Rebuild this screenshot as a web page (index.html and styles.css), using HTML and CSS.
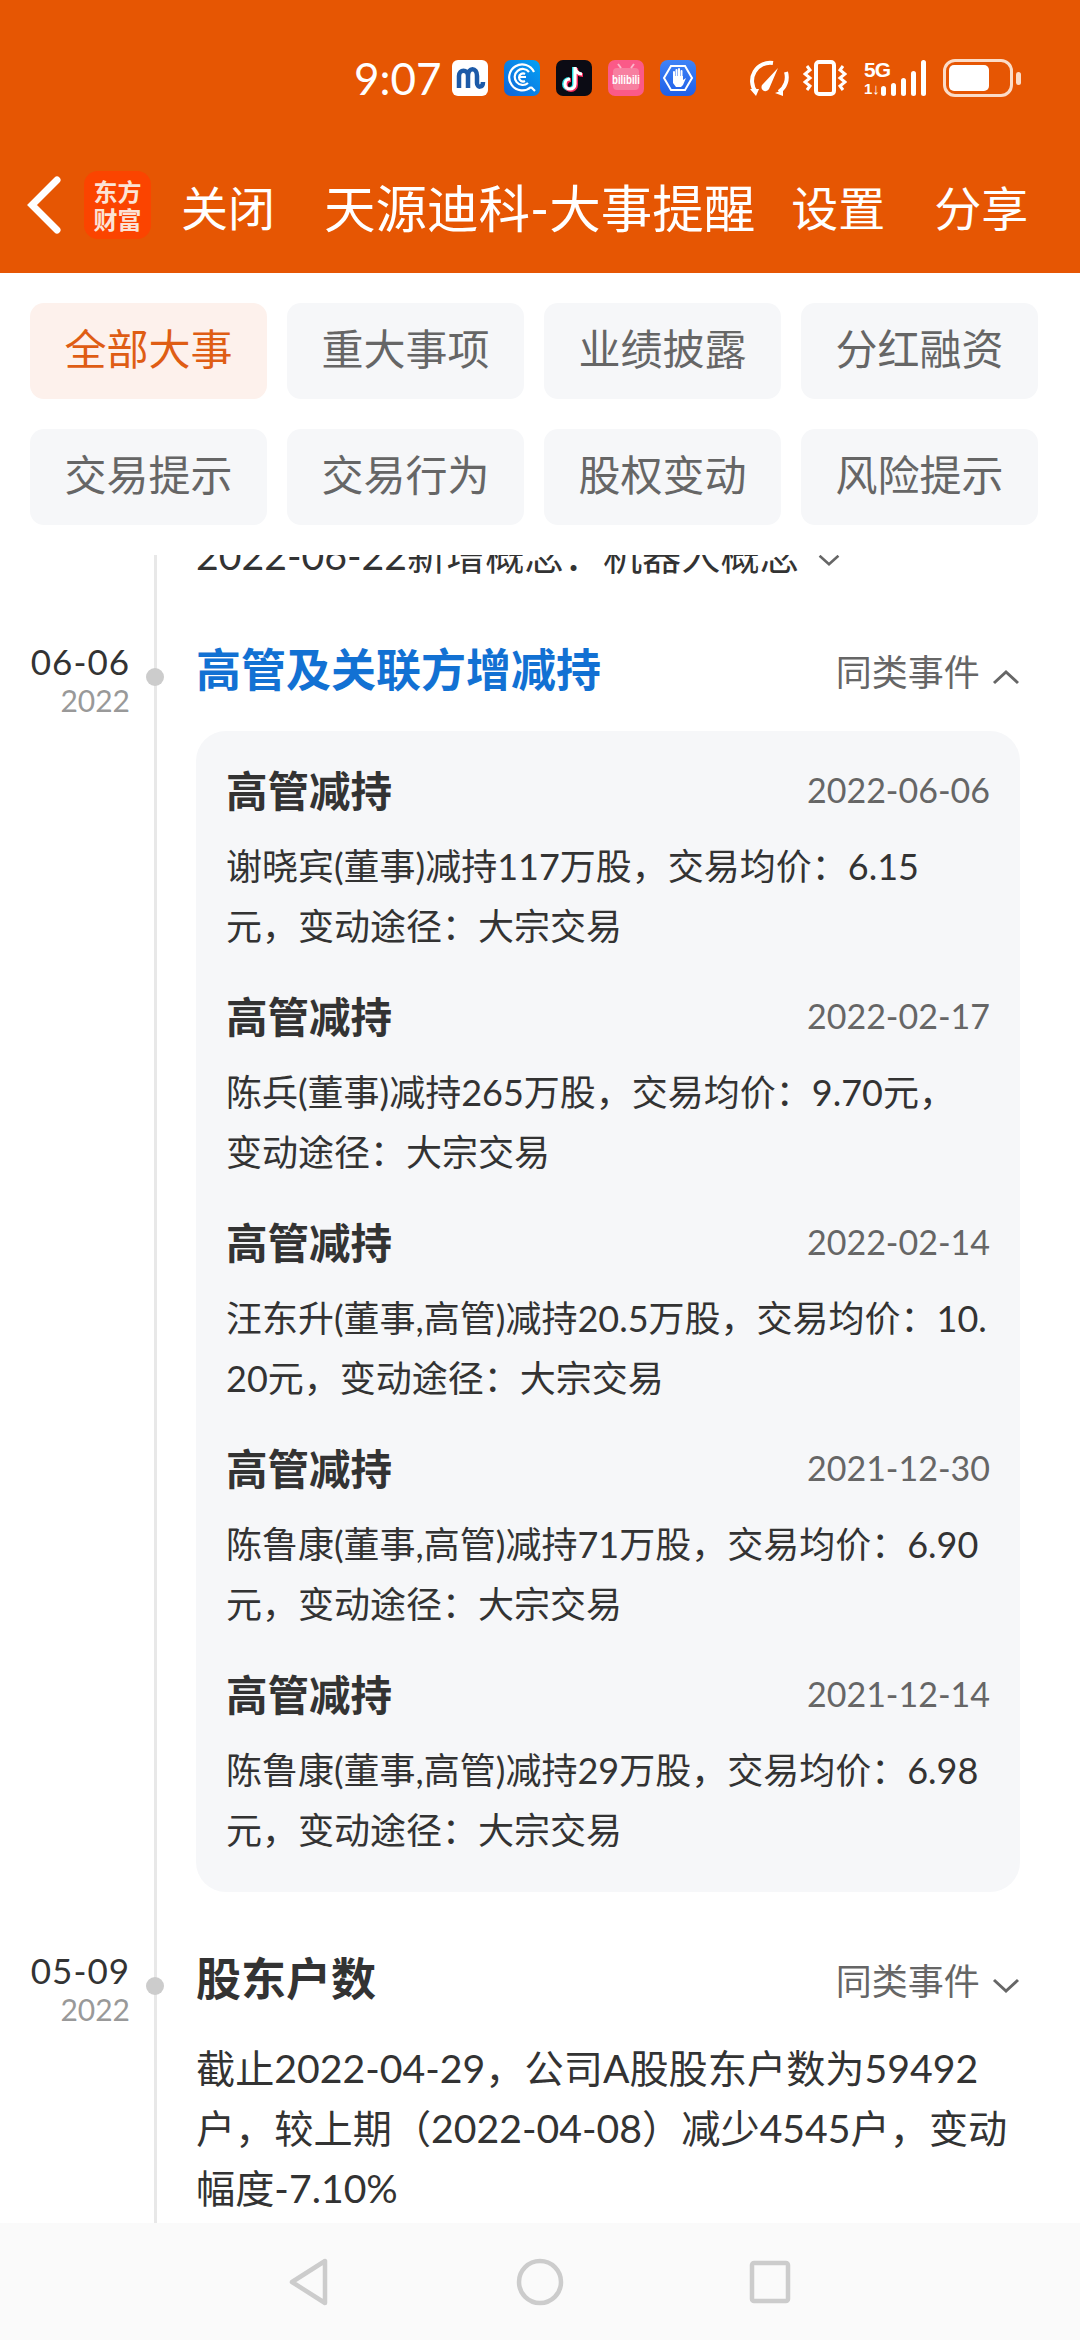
FILE: index.html
```html
<!DOCTYPE html>
<html lang="zh-CN">
<head>
  <meta charset="UTF-8">
  <meta name="viewport" content="width=device-width, initial-scale=1">
  <title>天源迪科-大事提醒</title>
  <link rel="stylesheet" href="styles.css">
</head>

<body>

  <header class="top">
    <div class="status-bar">
      <span class="clock">9:07</span>

      <div class="app-icons">
        <svg class="app-icon" viewBox="0 0 36 36">
          <rect width="36" height="36" rx="6" fill="#fff"/>
          <path d="M7 28V16c0-7 9-7 9 0v12M16 16c0-9 9-9 9 0v7c0 5 6 5 6-1" fill="none" stroke="#1c5aa8" stroke-width="4.5"/>
        </svg>
        <svg class="app-icon" viewBox="0 0 36 36">
          <defs>
            <linearGradient id="blueTile" x1="0" y1="1" x2="1" y2="0">
              <stop offset="0" stop-color="#0f63d8"/>
              <stop offset="1" stop-color="#04a3f5"/>
            </linearGradient>
          </defs>
          <rect width="36" height="36" rx="7" fill="url(#blueTile)"/>
          <path d="M27 27A13 13 0 1 1 30 12M24 23A8 8 0 1 1 25 12" fill="none" stroke="#fff" stroke-width="2.200"/>
          <path d="M21 21a4 4 0 1 1 0-7M15 17h7M27 27l4 4" fill="none" stroke="#fff" stroke-width="2.200"/>
        </svg>
        <svg class="app-icon" viewBox="0 0 36 36">
          <rect width="36" height="36" rx="7" fill="#0b0b14"/>
          <path d="M19 7v17a5 5 0 1 1-5-5M19 7c0 4 3 7 7 7" fill="none" stroke="#25e0e6" stroke-width="4" transform="translate(-1 0)"/>
          <path d="M19 7v17a5 5 0 1 1-5-5M19 7c0 4 3 7 7 7" fill="none" stroke="#f5295c" stroke-width="4" transform="translate(1 1)"/>
          <path d="M19 7v17a5 5 0 1 1-5-5M19 7c0 4 3 7 7 7" fill="none" stroke="#fff" stroke-width="3.200"/>
        </svg>
        <svg class="app-icon" viewBox="0 0 36 36">
          <rect width="36" height="36" rx="7" fill="#fb5a88"/>
          <rect x="5" y="8" width="26" height="22" rx="4" fill="#f77fa0"/>
          <path d="M13 8l-3-4M23 8l3-4" stroke="#fbb6c9" stroke-width="2"/>
          <text class="tile-text" x="4" y="24" textLength="28" lengthAdjust="spacingAndGlyphs">bilibili</text>
        </svg>
        <svg class="app-icon" viewBox="0 0 36 36">
          <defs>
            <linearGradient id="handTile" x1="0" y1="0" x2="0" y2="1">
              <stop offset="0" stop-color="#3f83f6"/>
              <stop offset="1" stop-color="#1f5fe8"/>
            </linearGradient>
          </defs>
          <rect width="36" height="36" rx="8" fill="url(#handTile)"/>
          <path d="M11 6h14l7 12-7 12H11L4 18z" fill="none" stroke="#fff" stroke-width="2"/>
          <path d="M14 18v-6M16.500 17v-7M19 17v-8M21.500 17v-6" fill="none" stroke="#fff" stroke-width="2" stroke-linecap="round"/>
          <path d="M13 16h10v4l3-2-3 7-2 2h-5l-3-4z" fill="#fff"/>
        </svg>
      </div>

      <div class="sys-icons">
        <svg class="sys-speed" viewBox="0 0 42 36">
          <path d="M9 32A18 18 0 0 1 26 3M39 12A18 18 0 0 1 32 32" fill="none" stroke="#fff" stroke-width="4"/>
          <path d="M31 8L16 24a4 4 0 1 0 6 5z" fill="#fff"/>
          <path d="M3 29l9 0-3 7zM28 33l8-3 0 6z" fill="#fff"/>
        </svg>
        <svg class="sys-vibrate" viewBox="0 0 44 36">
          <rect x="13" y="2" width="18" height="32" rx="3" fill="none" stroke="#fff" stroke-width="4"/>
          <path d="M4 6l3 4-5 4 5 4-5 4 5 4-3 4M40 6l-3 4 5 4-5 4 5 4-5 4 3 4" fill="none" stroke="#fff" stroke-width="3"/>
        </svg>
        <div class="net">
          <span class="net-label">5G</span>
          <span class="net-sub">1↓</span>
        </div>
        <div class="signal">
          <i class="bar-1"></i><i class="bar-2"></i><i class="bar-3"></i><i class="bar-4"></i><i class="bar-5"></i>
        </div>
        <div class="battery"><div class="battery-fill"></div></div>
        <div class="battery-tip"></div>
      </div>
    </div>

    <nav class="title-bar">
      <svg class="back" viewBox="0 0 34 58">
        <path d="M30 4L5 29l25 25" fill="none" stroke="#fff" stroke-width="7" stroke-linecap="round"/>
      </svg>
      <div class="logo">东方<br>财富</div>
      <span class="close-link">关闭</span>
      <h1>天源迪科-大事提醒</h1>
      <span class="action">设置</span>
      <span class="action">分享</span>
    </nav>
  </header>

  <section class="tabs">
    <div class="tab active">全部大事</div>
    <div class="tab">重大事项</div>
    <div class="tab">业绩披露</div>
    <div class="tab">分红融资</div>
    <div class="tab">交易提示</div>
    <div class="tab">交易行为</div>
    <div class="tab">股权变动</div>
    <div class="tab">风险提示</div>
  </section>

  <main class="timeline">
    <div class="timeline-inner">

      <p class="concept">2022-06-22新增概念：机器人概念
        <svg class="chevron small" viewBox="0 0 28 16"><path d="M3 3l11 10L25 3" /></svg>
      </p>

      <article class="event first">
        <div class="event-date">
          <div class="day">06-06</div>
          <div class="year">2022</div>
        </div>
        <div class="event-body">
          <div class="event-head">
            <h2 class="event-title link">高管及关联方增减持</h2>
            <span class="same-kind">同类事件
              <svg class="chevron" viewBox="0 0 28 16"><path d="M2 14L14 3l12 11" /></svg>
            </span>
          </div>

          <div class="card">
            <div class="item">
              <div class="item-head"><h3>高管减持</h3><span>2022-06-06</span></div>
              <p>谢晓宾(董事)减持117万股，交易均价：6.15元，变动途径：大宗交易</p>
            </div>
            <div class="item">
              <div class="item-head"><h3>高管减持</h3><span>2022-02-17</span></div>
              <p>陈兵(董事)减持265万股，交易均价：9.70元，变动途径：大宗交易</p>
            </div>
            <div class="item">
              <div class="item-head"><h3>高管减持</h3><span>2022-02-14</span></div>
              <p>汪东升(董事,高管)减持20.5万股，交易均价：10.20元，变动途径：大宗交易</p>
            </div>
            <div class="item">
              <div class="item-head"><h3>高管减持</h3><span>2021-12-30</span></div>
              <p>陈鲁康(董事,高管)减持71万股，交易均价：6.90元，变动途径：大宗交易</p>
            </div>
            <div class="item">
              <div class="item-head"><h3>高管减持</h3><span>2021-12-14</span></div>
              <p>陈鲁康(董事,高管)减持29万股，交易均价：6.98元，变动途径：大宗交易</p>
            </div>
          </div>
        </div>
      </article>

      <article class="event">
        <div class="event-date">
          <div class="day">05-09</div>
          <div class="year">2022</div>
        </div>
        <div class="event-body">
          <div class="event-head">
            <h2 class="event-title">股东户数</h2>
            <span class="same-kind">同类事件
              <svg class="chevron" viewBox="0 0 28 16"><path d="M2 2l12 11L26 2" /></svg>
            </span>
          </div>
          <p class="event-text">截止2022-04-29，公司A股股东户数为59492户，较上期（2022-04-08）减少4545户，变动幅度-7.10%</p>
        </div>
      </article>

    </div>
  </main>

  <footer class="nav-bar">
    <svg class="nav-icon" viewBox="0 0 46 52"><path d="M38 5v42L5 26z" /></svg>
    <svg class="nav-icon" viewBox="0 0 52 52"><circle cx="26" cy="26" r="21" /></svg>
    <svg class="nav-icon" viewBox="0 0 46 52"><rect x="5" y="7" width="36" height="38" rx="2" /></svg>
  </footer>

</body>
</html>
```

FILE: styles.css
```css
* {
  box-sizing: border-box;
}

body {
  margin: 0;
  width: 1080px;
  height: 2340px;
  display: flex;
  flex-direction: column;
  overflow: hidden;
  background-color: #fff;
  color: #333;
  font-family: Lato, "Noto Sans CJK SC", sans-serif;
}

h1, h2, h3, p {
  margin: 0;
}

/* Orange top area */
.top {
  height: 273px;
  flex-shrink: 0;
  background-color: #e65603;
  color: #fff;
}

.status-bar {
  height: 112px;
  padding: 44px 59px 0 354px;
  display: flex;
  align-items: center;
}

.clock {
  width: 100px;
  font-size: 44px;
  line-height: 44px;
}

.app-icons {
  display: flex;
  gap: 16px;
}

.app-icon {
  width: 36px;
  height: 36px;
  display: block;
}

.tile-text {
  fill: #fff;
  font-family: "Liberation Sans", sans-serif;
  font-size: 12px;
  font-weight: bold;
}

.sys-icons {
  margin-left: 51px;
  display: flex;
  align-items: center;
}

.sys-speed {
  width: 42px;
  height: 36px;
  margin-right: 14px;
}

.sys-vibrate {
  width: 44px;
  height: 36px;
  margin-right: 17px;
}

.net {
  width: 17px;
  height: 36px;
  display: flex;
  flex-direction: column;
  font-family: "Liberation Sans", sans-serif;
  font-weight: bold;
  white-space: nowrap;
}

.net-label {
  font-size: 21px;
  line-height: 20px;
  letter-spacing: -1px;
}

.net-sub {
  margin-top: 2px;
  font-size: 15px;
  line-height: 14px;
}

.signal {
  height: 36px;
  display: flex;
  align-items: flex-end;
  gap: 5px;
}

.signal i {
  width: 5px;
  background-color: #fff;
  border-radius: 3px;
}

.bar-1 { height: 10px; }
.bar-2 { height: 13px; }
.bar-3 { height: 18px; }
.bar-4 { height: 25px; }
.bar-5 { height: 36px; }

.battery {
  width: 70px;
  height: 38px;
  margin-left: 17px;
  padding: 3px;
  border: 3px solid #fbdcc8;
  border-radius: 12px;
}

.battery-fill {
  width: 40px;
  height: 100%;
  background-color: #fff;
  border-radius: 5px;
}

.battery-tip {
  width: 5px;
  height: 13px;
  margin-left: 3px;
  background-color: #fbdcc8;
  border-radius: 3px;
}

.title-bar {
  height: 161px;
  padding: 25px 0 0 27px;
  display: flex;
  align-items: center;
  font-size: 47px;
  white-space: nowrap;
}

.back {
  width: 34px;
  height: 58px;
  margin-right: 23px;
  flex-shrink: 0;
}

.logo {
  width: 67px;
  height: 68px;
  padding-top: 6px;
  margin-right: 30px;
  flex-shrink: 0;
  background-color: #fb4400;
  border-radius: 14px;
  color: #fbe3d6;
  font-family: "Noto Sans CJK SC", sans-serif;
  font-size: 24px;
  font-weight: bold;
  line-height: 28px;
  text-align: center;
}

.close-link {
  margin-right: 49px;
}

h1 {
  font-size: 51.5px;
  font-weight: normal;
  margin-right: 36px;
}

.action + .action {
  margin-left: 49px;
}

/* Filter tabs */
.tabs {
  padding: 30px 42px 30px 30px;
  display: grid;
  grid-template-columns: repeat(4, 237px);
  grid-auto-rows: 96px;
  gap: 30px 20px;
  flex-shrink: 0;
  height: 282px;
}

.tab {
  background-color: #f6f7f9;
  border-radius: 14px;
  color: #666;
  font-size: 42px;
  line-height: 92px;
  text-align: center;
}

.tab.active {
  background-color: #fdf1ec;
  color: #df5d14;
}

/* Timeline, already scrolled part way */
.timeline {
  flex: 1;
  min-height: 0;
  position: relative;
  overflow: hidden;
}

.timeline::before {
  content: "";
  position: absolute;
  top: 0;
  bottom: 0;
  left: 154px;
  width: 3px;
  background-color: #e8e8e8;
}

.timeline-inner {
  margin-top: -30px;
}

.concept {
  padding-left: 196px;
  font-size: 39.2px;
  line-height: 60px;
  height: 60px;
  white-space: nowrap;
}

.chevron {
  width: 28px;
  height: 16px;
  margin-left: 3px;
  vertical-align: middle;
}

.chevron path {
  fill: none;
  stroke: #666;
  stroke-width: 3;
}

.chevron.small {
  width: 24px;
  margin-left: 8px;
}

.event {
  display: flex;
  position: relative;
  margin-bottom: 57px;
}

.event.first {
  margin-top: 55px;
}

/* Dot sitting on the timeline */
.event::before {
  content: "";
  position: absolute;
  left: 146px;
  top: 28px;
  width: 18px;
  height: 18px;
  border-radius: 50%;
  background-color: #ccc;
}

.event-date {
  width: 130px;
  text-align: right;
  flex-shrink: 0;
}

.day {
  font-size: 35px;
  line-height: 42px;
  letter-spacing: 1px;
  color: #333;
}

.year {
  font-size: 30px;
  line-height: 36px;
  color: #999;
}

.event-body {
  margin-left: 66px;
  width: 824px;
}

.event-head {
  display: flex;
  justify-content: space-between;
  align-items: center;
  height: 60px;
}

.event-title {
  font-size: 45px;
  line-height: 60px;
  font-weight: bold;
  color: #333;
}

.event-title.link {
  color: #1271d3;
}

.same-kind {
  font-size: 36px;
  color: #666;
  white-space: nowrap;
}

.card {
  margin-top: 31px;
  padding: 29px 30px 32px 30px;
  background-color: #f6f7f9;
  border-radius: 30px;
}

.item + .item {
  margin-top: 30px;
}

.item-head {
  display: flex;
  justify-content: space-between;
  align-items: center;
  height: 60px;
}

.item-head h3 {
  margin-bottom: 3px;
  font-size: 41.5px;
  font-weight: bold;
  color: #333;
}

.item-head span {
  margin-bottom: 2px;
  font-size: 34px;
  color: #666;
}

.item p {
  margin: 16px 2px 0 0;
  font-size: 36px;
  line-height: 60px;
  word-break: break-all;
}

.event-text {
  margin-top: 29px;
  font-size: 39.2px;
  line-height: 60px;
  word-break: break-all;
}

/* System navigation */
.nav-bar {
  height: 117px;
  flex-shrink: 0;
  background-color: #fafafa;
  display: flex;
  justify-content: center;
  align-items: center;
  gap: 178px;
}

.nav-icon {
  height: 52px;
  width: 52px;
}

.nav-icon path,
.nav-icon circle,
.nav-icon rect {
  fill: none;
  stroke: #ccc;
  stroke-width: 4.5;
  stroke-linejoin: round;
}
```
